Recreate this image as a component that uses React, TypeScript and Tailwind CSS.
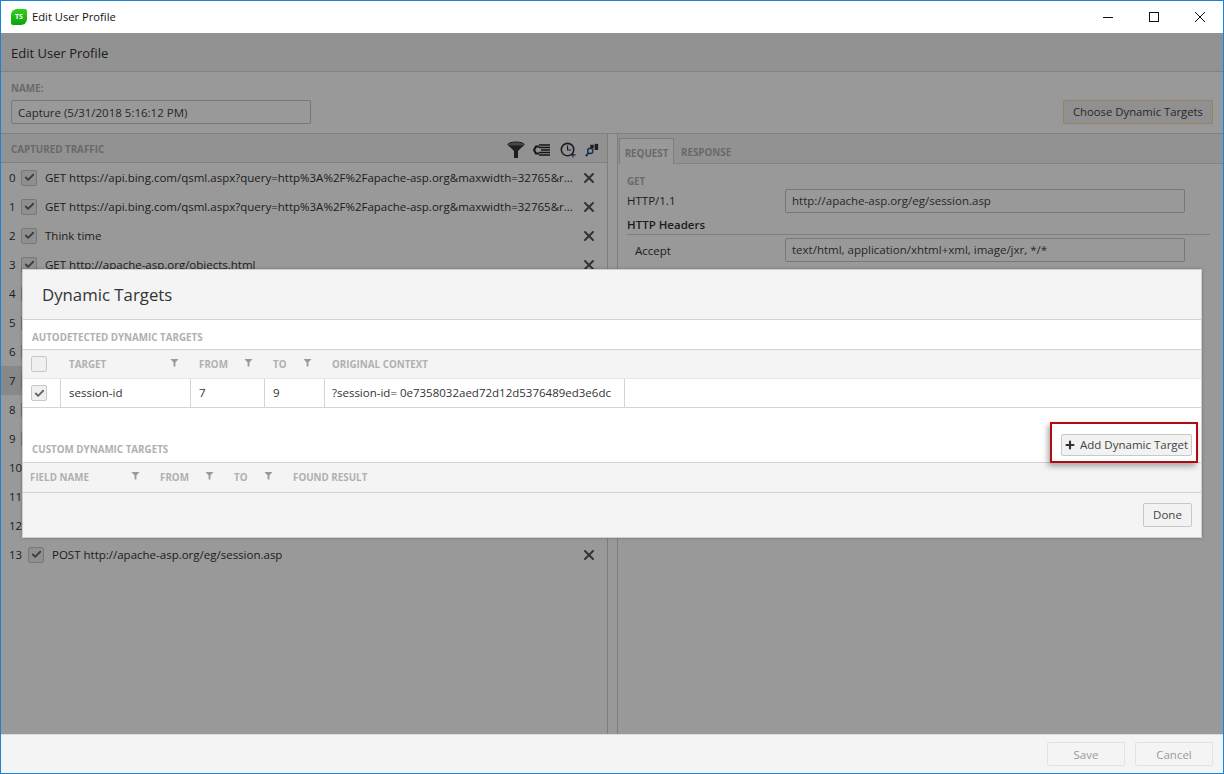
import { Plus, X, Check } from "lucide-react";

const url1 = "GET https://api.bing.com/qsml.aspx?query=http%3A%2F%2Fapache-asp.org&maxwidth=32765&r...";

const rows: { label?: string; hasClose?: boolean }[] = [
  { label: url1, hasClose: true },
  { label: url1, hasClose: true },
  { label: "Think time", hasClose: true },
  { label: "GET http://apache-asp.org/objects.html", hasClose: true },
  {},
  {},
  {},
  {},
  {},
  {},
  {},
  {},
  {},
  { label: "POST http://apache-asp.org/eg/session.asp", hasClose: true },
];

function CheckBox({ checked = true }: { checked?: boolean }) {
  return (
    <div className="flex h-[16px] w-[16px] shrink-0 items-center justify-center rounded-[2px] border border-[#c8c8c8] bg-[#efefef]">
      {checked && <Check className="h-[11px] w-[11px] text-[#666]" strokeWidth={4} />}
    </div>
  );
}

function FilterIcon() {
  return (
    <svg viewBox="0 0 10 10" className="-mt-[6px] h-[9px] w-[9px]">
      <path d="M0.5 1h9L6 5v4.500H4V5z" fill="#9a9a9a" />
    </svg>
  );
}

function Field({ label, value, indent = false }: { label: string; value: string; indent?: boolean }) {
  return (
    <div className="flex h-[24px] items-center">
      <div className={"w-[158px] text-[11.5px] text-[#333] " + (indent ? "pl-[8px] pt-[2px]" : "")}>{label}</div>
      <div className="flex h-[24px] w-[400px] items-center rounded-[2px] border border-[#c8c8c8] bg-white px-[6px] text-[11.5px] text-[#444]">
        {value}
      </div>
    </div>
  );
}

function ToolIcons() {
  return (
    <div className="flex items-center">
      <svg viewBox="0 0 18 18" className="h-[18px] w-[18px]">
        <ellipse cx="9" cy="3.500" rx="8" ry="2.500" fill="#777" stroke="#333" />
        <path d="M1.500 4.500 7 10v7h4v-7l5.500-5.500z" fill="#333" />
      </svg>
      <svg viewBox="0 0 18 14" className="ml-[8px] h-[14px] w-[18px]">
        <path d="M6 2h11M6 4.500h11M8 7h9M6 9.500h11M6 12h11" stroke="#222" strokeWidth="1.500" />
        <path d="M6 3.500 3 3.500 1 7l2 3.500h3" fill="none" stroke="#222" strokeWidth="2" />
      </svg>
      <svg viewBox="0 0 18 18" className="ml-[9px] h-[16px] w-[16px]">
        <circle cx="8.500" cy="8.500" r="7" fill="none" stroke="#333" strokeWidth="1.800" />
        <path d="M8.500 4v5h4" fill="none" stroke="#333" strokeWidth="1.300" />
        <path d="M14.500 11.500v6M11.500 14.500h6" stroke="#5a2d82" strokeWidth="1.300" />
      </svg>
      <svg viewBox="0 0 16 16" className="ml-[9px] h-[14px] w-[14px]">
        <rect x="6" y="2" width="4" height="4" fill="#333" />
        <rect x="11" y="1" width="4" height="7" fill="#333" />
        <circle cx="6" cy="9" r="3" fill="none" stroke="#1d4f86" strokeWidth="1.500" />
        <path d="M4 11.500 1 15" stroke="#1d4f86" strokeWidth="2" />
      </svg>
    </div>
  );
}

function DynamicTargetsModal() {
  return (
    <div className="absolute left-[21px] top-[236px] flex h-[269px] w-[1180px] flex-col border border-[#cfcfcf] bg-white shadow-[0_0_3px_rgba(0,0,0,0.25)]">
      <div className="flex h-[50px] items-center border-b border-[#d4d4d4] bg-[#f4f4f4] pl-[19px] text-[16.800px] text-[#333]">
        Dynamic Targets
      </div>
      <div className="flex h-[30px] items-center border-b border-[#d4d4d4] pl-[9px] pt-[8px] text-[9.800px] font-bold text-[#b0b0b0]">
        AUTODETECTED DYNAMIC TARGETS
      </div>
      <div className="flex h-[29px] items-center border-b border-[#e6e6e6] bg-[#f4f4f4] text-[9.800px] font-bold text-[#b0b0b0]">
        <div className="flex w-[37px] pl-[8px]">
          <CheckBox checked={false} />
        </div>
        <div className="flex w-[130px] items-center justify-between pl-[9px] pr-[11px] pt-[2px]">
          <span>TARGET</span>
          <FilterIcon />
        </div>
        <div className="flex w-[74px] items-center justify-between pl-[9px] pr-[11px] pt-[2px]">
          <span>FROM</span>
          <FilterIcon />
        </div>
        <div className="flex w-[60px] items-center justify-between pl-[9px] pr-[12px] pt-[2px]">
          <span>TO</span>
          <FilterIcon />
        </div>
        <div className="pl-[8px] pt-[2px]">ORIGINAL CONTEXT</div>
      </div>
      <div className="flex h-[29px] border-b border-[#d4d4d4] text-[11.500px] text-[#333]">
        <div className="flex w-[38px] items-center border-r border-[#d4d4d4] pl-[8px]">
          <CheckBox />
        </div>
        <div className="flex w-[130px] items-center border-r border-[#d4d4d4] pl-[8px]">session-id</div>
        <div className="flex w-[74px] items-center border-r border-[#d4d4d4] pl-[8px]">7</div>
        <div className="flex w-[60px] items-center border-r border-[#d4d4d4] pl-[8px]">9</div>
        <div className="flex w-[300px] items-center border-r border-[#d4d4d4] pl-[7px]">?session-id= 0e7358032aed72d12d5376489ed3e6dc</div>
      </div>
      <div className="relative flex h-[55px] items-end justify-between border-b border-[#d4d4d4] pb-[5px] pl-[9px] pr-[9px] text-[9.800px] font-bold text-[#b0b0b0]">
        <span className="-mb-[1px]">CUSTOM DYNAMIC TARGETS</span>
        <div className="mb-[1px] flex h-[22px] w-[131px] items-center gap-[4px] rounded-[2px] border border-[#c8c8c8] bg-[#f2f2f2] pl-[2px] text-[11.500px] font-normal text-[#444]">
          <Plus className="h-[12px] w-[12px] text-[#333]" strokeWidth={4.2} />
          Add Dynamic Target
        </div>
        <div className="absolute bottom-[-1px] right-[3px] h-[41px] w-[148px] border-2 border-[#b00a12] shadow-[-2px_3px_6px_rgba(0,0,0,0.35)]" />
      </div>
      <div className="flex h-[30px] items-center border-b border-[#d4d4d4] bg-[#f4f4f4] pt-[2px] text-[9.800px] font-bold text-[#b0b0b0]">
        <div className="flex w-[118px] items-center justify-between pl-[7px] pr-[1px]">
          <span>FIELD NAME</span>
          <FilterIcon />
        </div>
        <div className="flex w-[74px] items-center justify-between pl-[19px] pr-[1px]">
          <span>FROM</span>
          <FilterIcon />
        </div>
        <div className="flex w-[60px] items-center justify-between pl-[19px] pr-[2px]">
          <span>TO</span>
          <FilterIcon />
        </div>
        <div className="pl-[18px]">FOUND RESULT</div>
      </div>
      <div className="flex flex-1 items-start justify-end bg-[#f4f4f4] pr-[9px] pt-[10px]">
        <div className="flex h-[24px] w-[49px] items-center justify-center rounded-[2px] border border-[#c8c8c8] bg-[#f2f2f2] text-[11.500px] text-[#444]">
          Done
        </div>
      </div>
    </div>
  );
}

export default function App() {
  return (
    <div
      className="flex h-[774px] w-[1224px] flex-col overflow-hidden border border-[#1883d7] bg-white"
      style={{ fontFamily: '"Open Sans", "Noto Sans", sans-serif' }}
    >
      {/* title bar */}
      <div className="flex h-[32px] shrink-0 items-center bg-white">
        <div className="ml-[10px] flex h-[16px] w-[16px] items-center justify-center rounded-[2px] rounded-tl-[6px] rounded-br-[6px] bg-linear-to-b from-[#2fd11f] to-[#0ba30b] text-[7px] font-bold text-white">
          TS
        </div>
        <span className="ml-[5px] text-[11.200px] text-[#111]">Edit User Profile</span>
        <div className="ml-auto flex items-center">
          <div className="flex w-[46px] justify-center">
            <svg viewBox="0 0 10 10" className="h-[10px] w-[10px]">
              <path d="M0 5.500h10" stroke="#111" strokeWidth="1" />
            </svg>
          </div>
          <div className="flex w-[46px] justify-center">
            <svg viewBox="0 0 10 10" className="h-[10px] w-[10px]">
              <rect x="0.500" y="0.500" width="9" height="9" fill="none" stroke="#111" strokeWidth="1" />
            </svg>
          </div>
          <div className="flex w-[46px] justify-center">
            <svg viewBox="0 0 10 10" className="h-[10px] w-[10px]">
              <path d="M0 0l10 10M10 0 0 10" stroke="#111" strokeWidth="1" />
            </svg>
          </div>
        </div>
      </div>

      {/* dimmed body */}
      <div className="relative flex min-h-0 flex-1 flex-col bg-white">
        <div className="flex h-[39px] shrink-0 items-center border-b border-[#d8d8d8] bg-[#f4f4f4] pl-[10px] pt-[3px] text-[13px] text-[#333]">
          Edit User Profile
        </div>
        <div className="flex h-[62px] shrink-0 items-end justify-between border-b border-[#d8d8d8] bg-white pb-[9px] pl-[10px] pr-[10px]">
          <div>
            <div className="mb-[3px] text-[9.800px] font-bold text-[#b0b0b0]">NAME:</div>
            <div className="flex h-[24px] w-[300px] items-center rounded-[2px] border border-[#c8c8c8] px-[6px] pt-[1px] text-[11.500px] text-[#444]">
              Capture (5/31/2018 5:16:12 PM)
            </div>
          </div>
          <div className="flex h-[24px] w-[150px] items-center justify-center rounded-[2px] border border-[#ffd8a0] bg-[#f0f0f0] pt-[1px] text-[11.300px] text-[#444]">
            Choose Dynamic Targets
          </div>
        </div>

        <div className="flex min-h-0 flex-1">
          {/* captured traffic */}
          <div className="flex w-[607px] shrink-0 flex-col border-r border-[#d0d0d0]">
            <div className="flex h-[29px] shrink-0 items-center justify-between border-b border-[#d8d8d8] bg-[#f4f4f4] pl-[10px] pr-[8px] pt-[4px]">
              <span className="text-[9.800px] font-bold text-[#b0b0b0]">CAPTURED TRAFFIC</span>
              <ToolIcons />
            </div>
            <div className="flex-1 bg-white">
              {rows.map((row, i) => (
                <div key={i} className={"flex h-[29px] items-center pl-[8px] pr-[10px] text-[11.500px] text-[#333] " + (i === 7 ? "bg-[#e3e3e3]" : "")}>
                  <span className="w-[12px] shrink-0">{i}</span>
                  {i >= 10 && <span className="w-[7px] shrink-0" />}
                  <CheckBox />
                  {row.label && <span className="ml-[8px] whitespace-nowrap">{row.label}</span>}
                  {row.hasClose && <X className="ml-auto h-[16px] w-[16px] text-[#555]" strokeWidth={3} />}
                </div>
              ))}
            </div>
          </div>

          {/* request / response */}
          <div className="ml-[9px] flex min-w-0 flex-1 flex-col border-l border-[#d0d0d0]">
            <div className="flex h-[30px] shrink-0 items-end border-b border-[#d8d8d8] bg-[#f4f4f4] pl-[1px] text-[9.800px] font-bold text-[#b0b0b0]">
              <div className="-mb-[1px] flex h-[26px] w-[55px] items-center justify-center border border-b-0 border-[#d0d0d0] bg-white pt-[6px]">REQUEST</div>
              <div className="flex h-[25px] items-center pl-[7px] pt-[6px]">RESPONSE</div>
            </div>
            <div className="pl-[9px] pt-[11px]">
              <div className="mb-[-1px] text-[9.800px] font-bold text-[#b0b0b0]">GET</div>
              <Field label="HTTP/1.1" value="http://apache-asp.org/eg/session.asp" />
              <div className="mr-[13px] mt-[3px] border-b border-[#d0d0d0] pb-[1px] text-[11.500px] font-semibold text-[#333]">HTTP Headers</div>
              <div className="mt-[3px]">
                <Field label="Accept" value="text/html, application/xhtml+xml, image/jxr, */*" indent />
              </div>
            </div>
          </div>
        </div>

        {/* dim overlay */}
        <div className="absolute inset-0 bg-black/40" />
        <DynamicTargetsModal />
      </div>

      {/* footer */}
      <div className="flex h-[39px] shrink-0 items-center justify-end gap-[10px] border-t border-[#dcdcdc] bg-[#f4f4f4] pr-[10px]">
        <div className="flex h-[24px] w-[78px] items-center justify-center rounded-[2px] border border-[#e2e2e2] bg-[#f4f4f4] pt-[1px] text-[11.500px] text-[#999]">Save</div>
        <div className="flex h-[24px] w-[78px] items-center justify-center rounded-[2px] border border-[#e2e2e2] bg-[#f4f4f4] pt-[1px] text-[11.500px] text-[#999]">Cancel</div>
      </div>
    </div>
  );
}
